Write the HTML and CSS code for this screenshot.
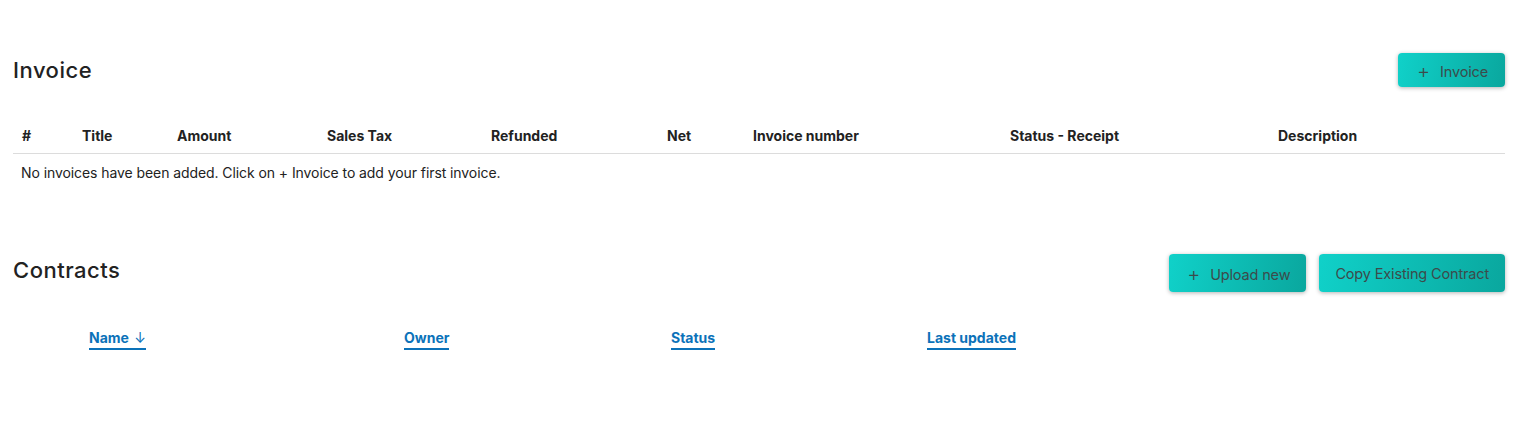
FILE: index.html
```html
<!DOCTYPE html>
<html lang="en">
<head>
    <meta charset="UTF-8">
    <meta name="viewport" content="width=device-width, initial-scale=1.0">
    <title>Invoices and Contracts</title>
    <link rel="stylesheet" href="styles.css">
</head>
<body>
    <!-- Invoices -->
    <section class="panel invoices">
        <div class="panel-head">
            <h2>Invoice</h2>
            <button class="btn"><span class="plus">+</span>Invoice</button>
        </div>

        <div class="invoice-table">
            <div class="invoice-row head">
                <span>#</span>
                <span>Title</span>
                <span>Amount</span>
                <span>Sales Tax</span>
                <span>Refunded</span>
                <span>Net</span>
                <span>Invoice number</span>
                <span>Status - Receipt</span>
                <span>Description</span>
            </div>
            <p class="empty">No invoices have been added. Click on + Invoice to add your first invoice.</p>
        </div>
    </section>

    <!-- Contracts -->
    <section class="panel contracts">
        <div class="panel-head">
            <h2>Contracts</h2>
            <div class="actions">
                <button class="btn wide"><span class="plus">+</span>Upload new</button>
                <button class="btn wide copy">Copy Existing Contract</button>
            </div>
        </div>

        <div class="contract-row head">
            <span></span>
            <a href="#">Name <span class="arrow">&#8595;</span></a>
            <a href="#">Owner</a>
            <a href="#">Status</a>
            <a href="#">Last updated</a>
        </div>
    </section>
</body>
</html>
```

FILE: styles.css
```css
body {
    margin: 0;
    padding: 0 23px 0 13px;
    font-family: Inter, "Noto Sans", sans-serif;
    color: #222;
    background: #fff;
}

.panel-head {
    display: flex;
    justify-content: space-between;
    align-items: center;
}

.panel-head h2 {
    margin: 0;
    font-size: 22px;
    font-weight: 500;
    letter-spacing: 0.5px;
}

.invoices {
    padding-top: 53px;
}

.invoices .panel-head {
    height: 34px;
}

/* Teal gradient buttons */
.btn {
    height: 34px;
    padding: 0 17px 0 19px;
    border: none;
    border-radius: 4px;
    background: linear-gradient(100deg, #10d1c9 0%, #0aa79e 100%);
    box-shadow: 0 1px 4px rgba(0, 0, 0, 0.3);
    color: #3c4b4b;
    font-family: inherit;
    font-size: 14.5px;
    letter-spacing: -0.15px;
    cursor: pointer;
}

.btn .plus {
    font-size: 20px;
    font-weight: 300;
    margin-right: 10px;
    position: relative;
    top: 1px;
}

.btn.wide {
    height: 38px;
}

.btn.copy {
    padding: 0 16px 0 16px;
}

.actions {
    display: flex;
    gap: 13px;
    margin-top: 6px;
}

.actions .btn:first-child {
    padding: 0 16px 0 18px;
}

/* Invoice table */
.invoice-table {
    margin-top: 31px;
}

.invoice-row {
    display: grid;
    grid-template-columns: 60px 95px 150px 164px 176px 86px 257px 268px 1fr;
    padding: 0 0 0 9px;
    font-size: 14px;
}

.invoice-row.head {
    height: 35px;
    align-items: center;
    font-weight: 700;
    border-bottom: 1px solid #dcdcdc;
}

.empty {
    margin: 0;
    padding: 10px 8px;
    font-size: 14px;
    letter-spacing: -0.08px;
}

/* Contracts */
.contracts {
    padding-top: 57px;
}

.contract-row {
    display: grid;
    grid-template-columns: 76px 315px 267px 256px 1fr;
    margin-top: 37px;
    font-size: 14px;
}

.contract-row a {
    justify-self: start;
    color: #0b72b9;
    font-weight: 700;
    text-decoration: none;
    padding-bottom: 2px;
    border-bottom: 2px solid #0b72b9;
}

.contract-row .arrow {
    font-weight: 400;
    margin-left: 2px;
}
```
